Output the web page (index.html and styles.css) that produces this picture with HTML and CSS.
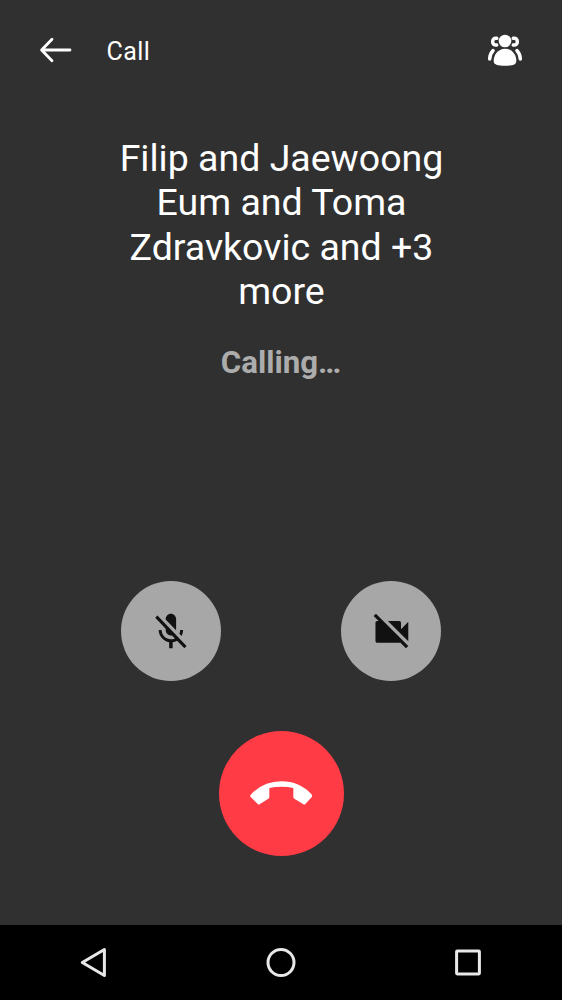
FILE: index.html
```html
<!DOCTYPE html>
<html lang="en">
<head>
<meta charset="utf-8">
<title>Call</title>
<link rel="stylesheet" href="styles.css">
</head>
<body>
<div class="screen">
  <header class="toolbar">
    <svg class="back" viewBox="0 0 34 26" aria-label="Back"><path d="M13 2.2 2.6 13 13 23.8M3 13h28" /></svg>
    <h1 class="heading">Call</h1>
    <svg class="people" viewBox="0 0 108 96" aria-label="Participants">
      <circle cx="54" cy="21" r="19"/>
      <path d="M54 44C76 44 88 64 88 80C88 92 77 95 54 95S20 92 20 80C20 64 32 44 54 44Z"/>
      <path class="outline" d="M29 13C13 10 13 36 29 33M79 13C95 10 95 36 79 33M18 50C11 58 8 66 8 75M90 50C97 58 100 66 100 75"/>
    </svg>
  </header>
  <main class="call">
    <h2 class="names">Filip and Jaewoong<br>Eum and Toma<br>Zdravkovic and +3<br>more</h2>
    <p class="status">Calling…</p>
    <div class="controls">
      <button class="toggle" aria-label="Mute"><svg class="mic" viewBox="0 0 24 24" preserveAspectRatio="none"><path d="M19 11h-1.7c0 .74-.16 1.43-.43 2.05l1.23 1.23c.56-.98.9-2.09.9-3.28zm-4.02.17c0-.06.02-.11.02-.17V5c0-1.66-1.34-3-3-3S9 3.34 9 5v.18l5.98 5.99zM4.27 3L3 4.27l6.01 6.01V11c0 1.66 1.33 3 2.99 3 .22 0 .44-.03.65-.08l1.66 1.66c-.71.33-1.5.52-2.31.52-2.76 0-5.3-2.1-5.3-5.1H5c0 3.41 2.72 6.23 6 6.72V21h2v-3.28c.91-.13 1.77-.45 2.54-.9L19.73 21 21 19.73 4.27 3z"/></svg></button>
      <button class="toggle" aria-label="Camera off"><svg class="cam" viewBox="0 0 24 24"><path d="M21 6.5l-4 4V7c0-.55-.45-1-1-1H9.82L21 17.18V6.5zM3.27 2L2 3.27 4.73 6H4c-.55 0-1 .45-1 1v10c0 .55.45 1 1 1h12c.21 0 .39-.08.54-.18L19.73 21 21 19.73 3.27 2z"/></svg></button>
    </div>
    <button class="hangup" aria-label="Hang up"><svg viewBox="0 0 188 72"><path d="M2 41Q40 1 94 1T186 41Q188 44 186 47L166 69Q163 72 159 69L133 53Q130 51 130 48V21Q113 17 94 17T58 21V48Q58 51 55 53L30 69Q26 72 23 69L2 48Q-1 45 2 41Z"/></svg></button>
  </main>
  <nav class="navbar">
    <svg viewBox="0 0 32 32"><path d="M26.4 2.5v26L4.3 15.5Z"/></svg>
    <svg viewBox="0 0 32 32"><circle cx="16" cy="15.5" r="13"/></svg>
    <svg viewBox="0 0 32 32"><rect x="4.6" y="4.1" width="22.8" height="22.8" rx=".6"/></svg>
  </nav>
</div>
</body>
</html>
```
FILE: styles.css
```css
* { box-sizing: border-box; margin: 0; padding: 0; }
body { background: #303030; color: #fff; font-family: Roboto, sans-serif; }
svg { display: block; flex: none; }
button { border: 0; border-radius: 50%; display: flex; align-items: center; justify-content: center; }
.screen { width: 562px; height: 1000px; display: flex; flex-direction: column; }
.toolbar { height: 100px; padding: 0 39px 0 39px; display: flex; align-items: center; }
.back { width: 34px; height: 26px; fill: none; stroke: #fff; stroke-width: 2.8; stroke-linecap: round; stroke-linejoin: round; }
.heading { margin: 3px auto 0 33.6px; font-size: 25px; line-height: 30px; font-weight: 400; letter-spacing: .4px; }
.people { width: 36px; height: 32px; fill: #fff; }
.outline { fill: none; stroke: #fff; stroke-width: 10.5; stroke-linecap: round; }
.call { flex: 1; display: flex; flex-direction: column; align-items: center; padding-top: 36px; }
.names { padding-left: 1px; font-size: 37.5px; line-height: 44.4px; font-weight: 400; text-align: center; white-space: nowrap; }
.status { margin-top: 30px; font-size: 31.25px; line-height: 37px; font-weight: 700; color: #acacac; }
.controls { margin-top: 200px; display: flex; gap: 120.4px; }
.toggle { width: 100px; height: 100px; background: #a7a7a7; }
.toggle svg { width: 43.75px; height: 43.75px; margin-top: 2px; fill: #111; }
.toggle .mic { width: 41.8px; }
.toggle .cam { margin-left: 1px; }
.hangup { margin-top: 50px; width: 125px; height: 125px; background: #ff3b46; }
.hangup svg { width: 62.7px; height: 24px; fill: #fff; }
.navbar { height: 75px; background: #000; padding: 0 78px; display: flex; align-items: center; justify-content: space-between; }
.navbar svg { width: 32px; height: 32px; fill: none; stroke: #e8e8e8; stroke-width: 3; stroke-linejoin: round; }
```
